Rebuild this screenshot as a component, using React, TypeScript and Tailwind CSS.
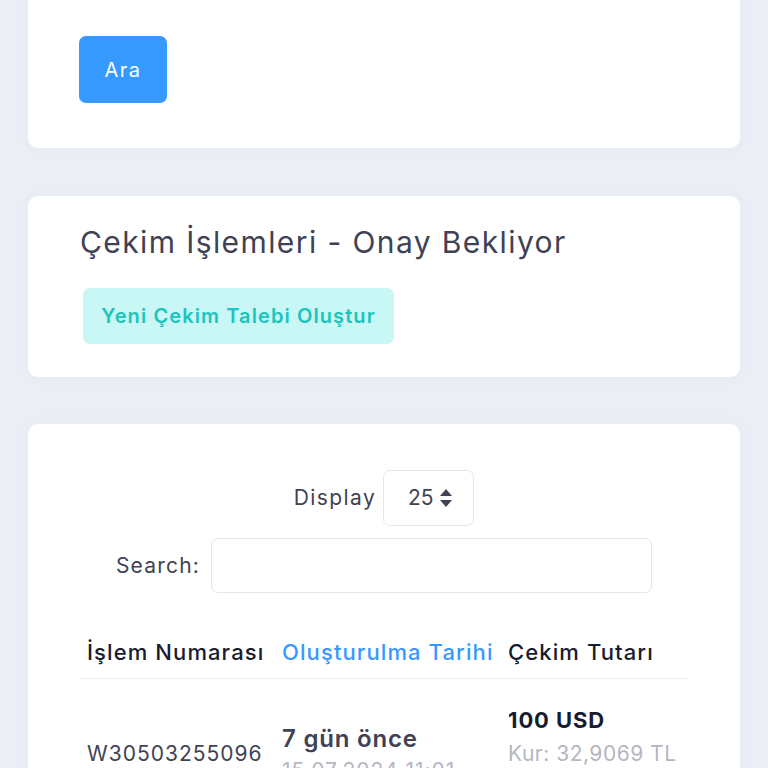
import React from "react";

function SortIcon() {
  return (
    <svg width="14" height="20" viewBox="0 0 14 20" className="ml-[6px]">
      <path d="M7 1 L13 8 H1 Z" fill="#3f4254" />
      <path d="M7 19 L13 12 H1 Z" fill="#3f4254" />
    </svg>
  );
}

export default function App() {
  return (
    <div
      className="min-h-[768px] w-[768px] overflow-hidden bg-[#eceef6] px-[28px]"
      style={{ fontFamily: "Inter, 'Noto Sans', sans-serif" }}
    >
      {/* Card 1 (scrolled, top cut) */}
      <div className="h-[148px] rounded-b-[10px] bg-white pl-[51px] pt-[36px] shadow-[0_0_20px_0_rgba(76,87,125,0.03)]">
        <button className="flex h-[67px] w-[88px] items-center justify-center rounded-[7px] bg-[#3699ff] text-[20px] font-normal tracking-[1.5px] text-white">
          Ara
        </button>
      </div>

      {/* Card 2 */}
      <div className="mt-[48px] h-[181px] rounded-[10px] bg-white pl-[52px] pt-[26px] shadow-[0_0_20px_0_rgba(76,87,125,0.03)]">
        <h1 className="text-[30px] font-normal leading-[40px] tracking-[1.4px] text-[#3f4254]">
          Çekim İşlemleri - Onay Bekliyor
        </h1>
        <button className="ml-[3px] mt-[26px] flex h-[56px] w-[311px] items-center justify-center rounded-[7px] bg-[#c9f7f5] text-[20px] font-semibold tracking-[1.1px] text-[#1bc5bd]">
          Yeni Çekim Talebi Oluştur
        </button>
      </div>

      {/* Card 3 */}
      <div className="mt-[47px] h-[400px] rounded-[10px] bg-white px-[52px] pt-[46px] shadow-[0_0_20px_0_rgba(76,87,125,0.03)]">
        <div className="flex items-center justify-center">
          <span className="mr-[7px] text-[21px] tracking-[1.4px] text-[#3f4254]">Display</span>
          <div className="flex h-[56px] w-[91px] items-center justify-center rounded-[7px] border border-[#e4e6ef] pl-[4px] text-[21px] text-[#3f4254]">
            25
            <SortIcon />
          </div>
        </div>
        <div className="mt-[12px] flex items-center justify-center">
          <span className="mr-[11px] text-[21px] tracking-[1.2px] text-[#3f4254]">Search:</span>
          <div className="h-[55px] w-[441px] rounded-[7px] border border-[#e4e6ef]" />
        </div>

        <div className="mt-[32px] w-[608px]">
          <div className="flex h-[54px] items-center border-b border-[#eff2f5] pt-[2px] text-[22px] font-medium tracking-[1.1px]">
            <div className="w-[194px] whitespace-nowrap pl-[7px] text-[#181c32]">İşlem Numarası</div>
            <div className="w-[226px] whitespace-nowrap pl-[8px] text-[#3699ff]">Oluşturulma Tarihi</div>
            <div className="whitespace-nowrap pl-[8px] text-[#181c32]">Çekim Tutarı</div>
          </div>
          <div className="flex items-center pt-[24px]">
            <div className="w-[194px] pl-[7px] text-[21px] tracking-[1px] text-[#3f4254]">W30503255096</div>
            <div className="w-[226px] pl-[8px]">
              <div className="text-[24px] font-semibold leading-[34px] tracking-[0.8px] text-[#3f4254]">7 gün önce</div>
              <div className="text-[21px] leading-[30px] tracking-[1px] text-[#b5b5c3]">15.07.2024 11:01</div>
            </div>
            <div className="pl-[8px]">
              <div className="text-[22px] font-bold leading-[34px] tracking-[0.9px] text-[#181c32]">100 USD</div>
              <div className="text-[21px] leading-[34px] tracking-[0.5px] text-[#b5b5c3]">Kur: 32,9069 TL</div>
              <div className="text-[21px] leading-[34px] tracking-[0.5px] text-[#b5b5c3]">3.290,69 TL</div>
            </div>
          </div>
        </div>
      </div>
    </div>
  );
}
